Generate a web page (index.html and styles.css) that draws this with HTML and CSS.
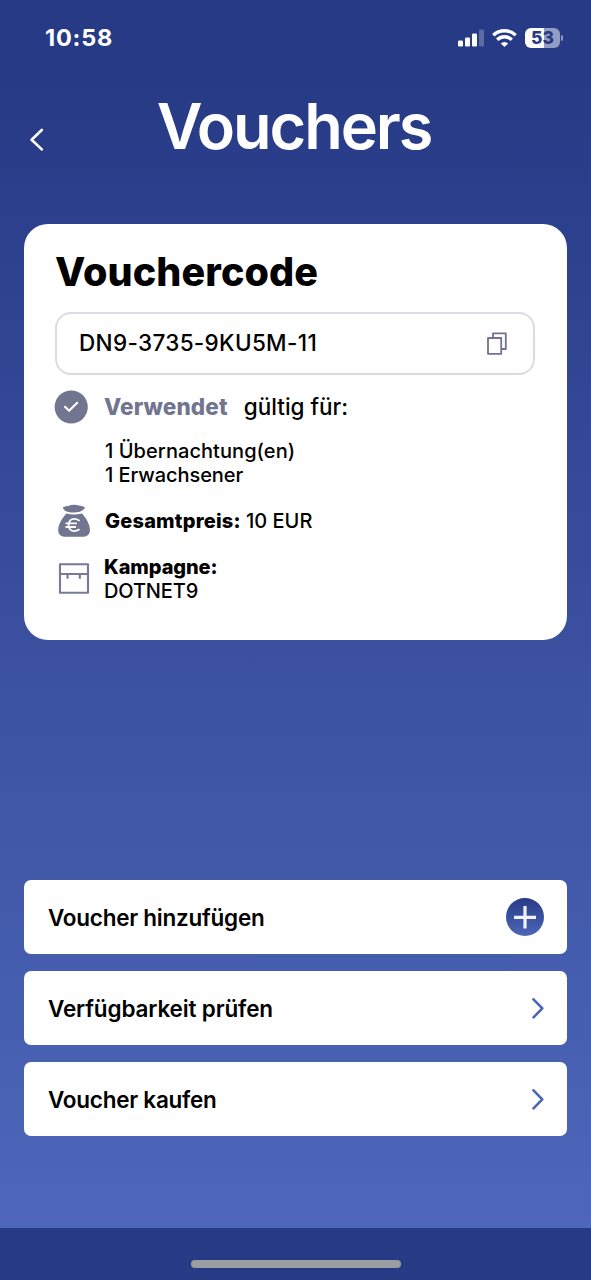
FILE: index.html
```html
<!DOCTYPE html>
<html lang="de">
<head>
<meta charset="utf-8">
<title>Vouchers</title>
<link rel="stylesheet" href="styles.css">
</head>
<body>
<div class="screen">
  <div class="status-bar">
    <span class="time">10:58</span>
    <div class="status-icons">
      <svg class="signal" width="26" height="18" viewBox="0 0 26 18" fill="#fff">
        <rect x="0" y="11.5" width="5" height="6" rx="1.3"/>
        <rect x="7" y="8.5" width="5" height="9" rx="1.3"/>
        <rect x="14" y="4.5" width="5" height="13" rx="1.3"/>
        <rect x="21" y="0.5" width="5" height="17" rx="1.3" opacity=".25"/>
      </svg>
      <svg class="wifi" width="25" height="18" viewBox="0 0 25 18" fill="none" stroke="#fff" stroke-width="3.4">
        <path d="M1.3 6.3A16 16 0 0 1 23.7 6.3"/>
        <path d="M5.2 10.8A10.4 10.4 0 0 1 19.8 10.8"/>
        <path d="M12.5 18L8.8 14.5A5.3 5.3 0 0 1 16.2 14.5Z" fill="#fff" stroke="none"/>
      </svg>
      <div class="battery"><span class="level">53</span><i class="battery-tip"></i></div>
    </div>
  </div>

  <header class="header">
    <svg class="back" width="15" height="24" viewBox="0 0 15 24" fill="none" stroke="#fff" stroke-width="2.6" stroke-linecap="round" stroke-linejoin="round"><path d="M12.8 3L2.6 12.7L12.8 22.4"/></svg>
    <h1 class="title"><span>Vouchers</span></h1>
  </header>

  <main class="content">
    <section class="card">
      <h2 class="card-title"><span>Vouchercode</span></h2>
      <div class="code-field">
        <span class="code">DN9-3735-9KU5M-11</span>
        <svg width="20" height="23" viewBox="0 0 20 23" fill="none" stroke="#71738f" stroke-width="1.8" stroke-linejoin="round"><path d="M6 6V1.3H18.8V17H14.2"/><rect x="1" y="6" width="13.2" height="15.8"/></svg>
      </div>
      <div class="row status-row">
        <svg class="row-icon" width="34" height="34" viewBox="0 0 34 34"><circle cx="17.2" cy="17" r="16.6" fill="#71758f"/><path d="M11 16.8L15.1 20.8L23.2 12.8" fill="none" stroke="#fff" stroke-width="2.2" stroke-linecap="round" stroke-linejoin="round"/></svg>
        <span class="used">Verwendet</span>
        <span class="valid">gültig für:</span>
      </div>
      <div class="details">
        <p><span class="nights">1 Übernachtung(en)</span></p>
        <p><span class="adults">1 Erwachsener</span></p>
      </div>
      <div class="row price-row">
        <svg class="row-icon" width="34" height="34" viewBox="0 0 34 34" fill="#71758f">
          <path d="M5.8 5Q6.5 3.4 11 3Q17 .6 22.5 2.7Q27 3 28 4.8Q26.3 7.8 22.8 8.8Q17 10.2 11.2 9Q7.4 8.2 5.8 5Z"/>
          <path d="M9.4 10.5Q17 12.5 25.1 10.4C29.5 15.2 33 21.8 33 27.2C33 31.8 29.5 33.8 25 33.8H9C4.5 33.8 1.2 31.8 1.2 27.2C1.2 21.8 4.8 15.5 9.4 10.5Z"/>
          <path d="M22 17.4Q19.8 15.8 17.3 15.8Q12 15.8 11.6 22Q12 28.2 17.3 28.2Q19.8 28.2 22 26.6M9.2 20.3H19.2M9.2 24H18.3" fill="none" stroke="#fff" stroke-width="1.8" stroke-linecap="round"/>
        </svg>
        <p class="price"><b class="price-label">Gesamtpreis:</b> <span>10 EUR</span></p>
      </div>
      <div class="row campaign-row">
        <svg class="row-icon" width="34" height="34" viewBox="0 0 34 34" fill="none" stroke="#777a99" stroke-width="2.1" stroke-linejoin="round"><rect x="3" y="2.2" width="28" height="28.6"/><path d="M3 12H31M10.5 12V16.8M22.8 12V16.8"/></svg>
        <div>
          <p><b class="campaign-label">Kampagne:</b></p>
          <p><span class="campaign-name">DOTNET9</span></p>
        </div>
      </div>
    </section>

    <nav class="actions">
      <a class="action"><span class="add-label">Voucher hinzufügen</span>
        <svg width="38" height="38" viewBox="0 0 38 38"><defs><linearGradient id="plus-fill" x1="0" y1="0" x2="0" y2="1"><stop offset="0" stop-color="#283b87"/><stop offset="1" stop-color="#4d66b8"/></linearGradient></defs><circle cx="19" cy="19" r="19" fill="url(#plus-fill)"/><path d="M19 8V30.5M8 19.3H30" stroke="#f0f3ff" stroke-width="3.2"/></svg>
      </a>
      <a class="action"><span class="check-label">Verfügbarkeit prüfen</span>
        <svg width="13" height="22" viewBox="0 0 13 22" fill="none" stroke="#4b65b7" stroke-width="2.6" stroke-linecap="round" stroke-linejoin="round"><path d="M2.5 2.3L11.3 11.3L2.5 20.3"/></svg>
      </a>
      <a class="action"><span class="buy-label">Voucher kaufen</span>
        <svg width="13" height="22" viewBox="0 0 13 22" fill="none" stroke="#4b65b7" stroke-width="2.6" stroke-linecap="round" stroke-linejoin="round"><path d="M2.5 2.3L11.3 11.3L2.5 20.3"/></svg>
      </a>
    </nav>
  </main>
  <footer class="home-bar"><div class="home-indicator"></div></footer>
</div>
</body>
</html>
```
FILE: styles.css
```css
* { box-sizing: border-box; margin: 0; padding: 0; }
body { font-family: Inter, "Liberation Sans", sans-serif; color: #000; }
svg { display: block; flex: none; }
.screen {
  width: 591px; height: 1280px; overflow: hidden;
  display: flex; flex-direction: column;
  background: linear-gradient(#273a86 0, #273a86 76px, #4e67ba 1228px);
}
.status-bar {
  height: 76px; padding: 0 26px 0 45px; flex: none;
  display: flex; align-items: center; justify-content: space-between;
}
.time { color: #fff; font-size: 23.5px; font-weight: 700; line-height: 30px; letter-spacing: .8px; }
.status-icons { display: flex; align-items: center; gap: 8px; }
.battery {
  position: relative; width: 35px; height: 20px; border-radius: 6px; margin: 0 5px 0 0;
  background: linear-gradient(90deg, #fff 53%, #939dc3 53%);
  display: flex; align-items: center; justify-content: center;
}
.level { color: #273a86; font-size: 17.5px; font-weight: 800; line-height: 20px; }
.battery-tip {
  position: absolute; right: -3px; top: 7px; width: 2px; height: 6px;
  border-radius: 0 3px 3px 0; background: #939dc3;
}
.header { height: 148px; flex: none; display: grid; grid-template-columns: 30px 1fr 30px; }
.back { margin: 51px 0 0 29px; }
.title {
  color: #fff; font-size: 63px; font-weight: 600; line-height: 76px;
  padding: 12px 3px 0 0; text-align: center; letter-spacing: -2.1px;
}
.content { flex: 1; padding: 0 24px; display: flex; flex-direction: column; justify-content: space-between; }
.card { height: 416px; background: #fff; border-radius: 24px; padding: 24px 32px 0 31px; }
.card-title { font-size: 39.5px; font-weight: 800; line-height: 48px; letter-spacing: .1px; }
.code-field {
  margin-top: 16px; height: 63px; border: 2px solid #dadbe4; border-radius: 16px;
  display: flex; align-items: center; justify-content: space-between; padding: 0 26px 0 22px;
}
.code { font-size: 22.5px; font-weight: 500; line-height: 28px; padding-bottom: 2px; letter-spacing: .33px; }
.row { display: flex; align-items: center; }
.row-icon { margin-right: 16px; }
.status-row { margin-top: 15px; height: 34px; margin-left: -1px; }
.used { font-size: 22.5px; font-weight: 800; color: #71758f; line-height: 28px; letter-spacing: .15px; }
.valid { font-size: 22.5px; font-weight: 500; line-height: 28px; margin-left: 16px; }
.details { margin: 15px 0 0 50px; }
.card p { font-size: 20px; line-height: 24px; font-weight: 500; }
.nights { letter-spacing: .06px; }
.adults { letter-spacing: -.08px; }
.card b { font-weight: 800; }
.price-label { letter-spacing: .2px; }
.campaign-label { letter-spacing: -.1px; }
.campaign-name { letter-spacing: -.12px; }
.price-row { margin-top: 16px; height: 34px; margin-left: 2px; }
.price { padding-top: 1px; }
.price-row .row-icon { margin-right: 14px; }
.campaign-row .row-icon { margin-right: 13px; }
.campaign-row { margin-top: 18px; height: 48px; margin-left: 2px; }
.actions { display: flex; flex-direction: column; gap: 17px; padding-bottom: 92px; }
.action {
  height: 74px; background: #fff; border-radius: 7px; padding: 0 23px 0 24px;
  display: flex; align-items: center; justify-content: space-between;
  font-size: 22.5px; font-weight: 600; line-height: 28px;
}
.action span { padding-top: 1px; letter-spacing: -.25px; }
.action .check-label { letter-spacing: -.15px; }
.home-bar { height: 52px; flex: none; background: #273a86; display: flex; justify-content: center; padding-top: 32px; }
.home-indicator { width: 210px; height: 8px; border-radius: 4px; background: #9c9da1; }
```
